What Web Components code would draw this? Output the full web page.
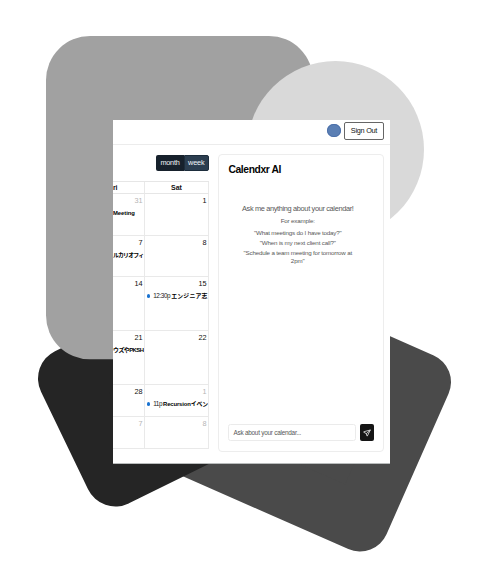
<!DOCTYPE html>
<html lang="en">
<head>
<meta charset="utf-8">
<title>Calendxr</title>
<style>
html,body{margin:0;padding:0;background:#fff}
body{width:488px;height:575px;overflow:hidden;font-family:"Liberation Sans","Noto Sans CJK JP",sans-serif;color:#111}
</style>
</head>
<body>
<hero-scene>
  <app-window>
    <app-header slot="header"></app-header>
    <month-calendar slot="calendar"></month-calendar>
    <assistant-panel slot="assistant"></assistant-panel>
  </app-window>
</hero-scene>
<script>
const define = (name, html, after) => customElements.define(name, class extends HTMLElement {
  connectedCallback() {
    if (this.shadowRoot) return;
    this.attachShadow({mode: 'open'}).innerHTML = html;
    if (after) after(this);
  }
});

// A single line of text whose tracking is tuned to fill the width "w".
define('fit-text', `<style>:host{display:inline-block;white-space:pre;flex:none}span{display:inline-block}</style><span><slot></slot></span>`, el => {
  const span = el.shadowRoot.querySelector('span');
  const w = +el.getAttribute('w');
  const n = [...el.textContent].length;
  if (w && n) {
    const natural = span.getBoundingClientRect().width;
    span.style.letterSpacing = ((w - natural) / n).toFixed(3) + 'px';
  }
});

define('day-event', `<style>
:host{display:flex;align-items:center;height:8px;line-height:8px;font-size:5.9px;color:#000;white-space:nowrap}
i{width:3.4px;height:3.4px;border-radius:50%;background:#1a73d1;margin:0 2.8px 0 2px;flex:none}
</style>`, el => {
  const time = el.getAttribute('time');
  el.shadowRoot.innerHTML += (time ? `<i></i><fit-text w="${el.getAttribute('tw')}" style="margin-right:1px;font-size:6.4px;color:#222">${time}</fit-text>` : '')
    + `<fit-text w="${el.getAttribute('w')}" style="font-weight:700">${el.getAttribute('name')}</fit-text>`;
});

define('day-cell', `<style>
:host{display:block;box-sizing:border-box;overflow:hidden;border-right:1px solid #e9e9e9;border-bottom:1px solid #e9e9e9;min-width:0}
.n{height:8px;line-height:8px;padding:3px 1.5px 0 0;text-align:right;font-size:7.3px;color:#111}
:host([muted]) .n{color:#b5b5b5}
::slotted(day-event){margin-top:4px}
</style><div class="n"></div><slot></slot>`, el => {
  el.shadowRoot.querySelector('.n').textContent = el.getAttribute('n');
});

define('month-calendar', `<style>
:host{display:flex;flex-direction:column;width:96px}
.bar{display:flex;justify-content:flex-end;padding:10px .5px 0 0;height:16px}
.b{height:16px;line-height:15px;color:#f1f4f7;text-align:center;font-size:7.3px;box-sizing:border-box}
.m{width:28px;background:#17212c;border-radius:2px 0 0 2px}
.w{width:24.5px;background:#2c3e50;border-radius:0 2px 2px 0;border:1px solid #1d2d3c;line-height:13px}
.grid{display:grid;grid-template-columns:32px 64px;grid-template-rows:12px 42px 41px 54px 54px 32px 32px;border-top:1px solid #e6e6e6;margin-top:10px}
.h{border-right:1px solid #e9e9e9;border-bottom:1px solid #e6e6e6;box-sizing:border-box;font-weight:700;font-size:7px;line-height:11px;text-align:center}
.h.f{text-align:left}
</style>
<div class="bar"><div class="b m"><fit-text w="19">month</fit-text></div><div class="b w"><fit-text w="16.3">week</fit-text></div></div>
<div class="grid">
<div class="h f"><fit-text w="4">ri</fit-text></div><div class="h"><fit-text w="11">Sat</fit-text></div>
<day-cell n="31" muted><day-event name="Meeting" w="21.8"></day-event></day-cell><day-cell n="1"></day-cell>
<day-cell n="7"><day-event name="ルカリオフィ" w="30.5"></day-event></day-cell><day-cell n="8"></day-cell>
<day-cell n="14"></day-cell><day-cell n="15"><day-event time="12:30p" tw="17" name="エンジニア志" w="36.5"></day-event></day-cell>
<day-cell n="21"><day-event name="ウズやPKSH" w="30.5"></day-event></day-cell><day-cell n="22"></day-cell>
<day-cell n="28"></day-cell><day-cell n="1" muted><day-event time="11p" tw="8.8" name="Recursionイベン" w="45"></day-event></day-cell>
<day-cell n="7" muted></day-cell><day-cell n="8" muted></day-cell>
</div>`);

define('app-header', `<style>
:host{display:flex;align-items:center;justify-content:flex-end;box-sizing:border-box;height:25px;border-bottom:1px solid #ececec;padding:0 6px 3px 0;gap:3.5px}
.a{width:13.5px;height:13.5px;border-radius:50%;background:#5b7fb4;box-shadow:inset 0 0 0 1px #4c70aa}
.s{box-sizing:border-box;width:40px;height:18px;border:1px solid #666;border-radius:2px;text-align:center;font-size:7.3px;line-height:16px;color:#111}
</style><div class="a"></div><div class="s"><fit-text w="26.3">Sign Out</fit-text></div>`);

define('assistant-panel', `<style>
:host{display:flex;flex-direction:column;box-sizing:border-box;width:166px;height:298px;border:1px solid #ededed;border-radius:4px;padding:9px 9px 10px;margin-top:9px}
h1{margin:0;font-size:10.3px;line-height:12px;color:#050505}
h1 fit-text{margin-left:.5px}
.msg{flex:1;display:flex;flex-direction:column;align-items:center;padding:28px 6.500px 0 0;color:#585858;font-size:6.2px;line-height:8px}
.lead{font-size:7.4px;line-height:10px;margin-bottom:3px}
.ex{margin-bottom:3.5px}.q{margin-bottom:2px}
.row{display:flex;justify-content:space-between}
.in{box-sizing:border-box;width:128px;height:17px;border:1px solid #ebebeb;border-radius:2.5px;padding-left:4.5px;font-size:6.4px;line-height:15px;color:#585858}
.go{width:14.5px;height:17px;background:#151515;border-radius:2px;display:flex;align-items:center;justify-content:center}
</style>
<h1><fit-text w="52.5">Calendxr AI</fit-text></h1>
<div class="msg">
<div class="lead"><fit-text w="111.5">Ask me anything about your calendar!</fit-text></div>
<div class="ex"><fit-text w="34">For example:</fit-text></div>
<div class="q"><fit-text w="87.5">"What meetings do I have today?"</fit-text></div>
<div class="q"><fit-text w="76">"When is my next client call?"</fit-text></div>
<div><fit-text w="108.5">"Schedule a team meeting for tomorrow at</fit-text></div>
<div><fit-text w="14">2pm"</fit-text></div>
</div>
<div class="row"><div class="in"><fit-text w="67.5">Ask about your calendar...</fit-text></div>
<div class="go"><svg width="8" height="8" viewBox="0 0 24 24" fill="none" stroke="#e8e8e8" stroke-width="2.4" stroke-linecap="round" stroke-linejoin="round"><path d="M21.500 4 13 21a.5.5 0 0 1-.9 0l-2.500-7.500-7.600-4a.5.5 0 0 1 0-.9z"/><path d="M21.500 4 10.500 13.500"/></svg></div></div>`);

define('app-window', `<style>
:host{display:flex;flex-direction:column;width:277px;height:344px;background:#fff;overflow:hidden;box-sizing:border-box;border-bottom:1px solid #b9bcbc}
.body{display:flex;gap:9px}
</style><slot name="header"></slot><div class="body"><slot name="calendar"></slot><slot name="assistant"></slot></div>`);

define('hero-scene', `<style>
:host{display:grid;width:488px;height:575px}
svg,.stage{grid-area:1/1}
.stage{padding:120px 0 0 113px}
</style>
<svg width="488" height="575" viewBox="0 0 488 575">
<path d="M422 382 360 522.500 177 442 239 301z" fill="#4a4a4a" stroke="#4a4a4a" stroke-width="58" stroke-linejoin="round"/>
<path d="M68.500 378.500 115.500 476 205 432 158.500 334z" fill="#252525" stroke="#252525" stroke-width="61" stroke-linejoin="round"/>
<rect x="46" y="36" width="267" height="323.300" rx="44" fill="#a1a1a1"/>
<circle cx="335.500" cy="149.500" r="88.500" fill="#d9d9d9"/>
</svg>
<div class="stage"><slot></slot></div>`);
</script>
</body>
</html>
